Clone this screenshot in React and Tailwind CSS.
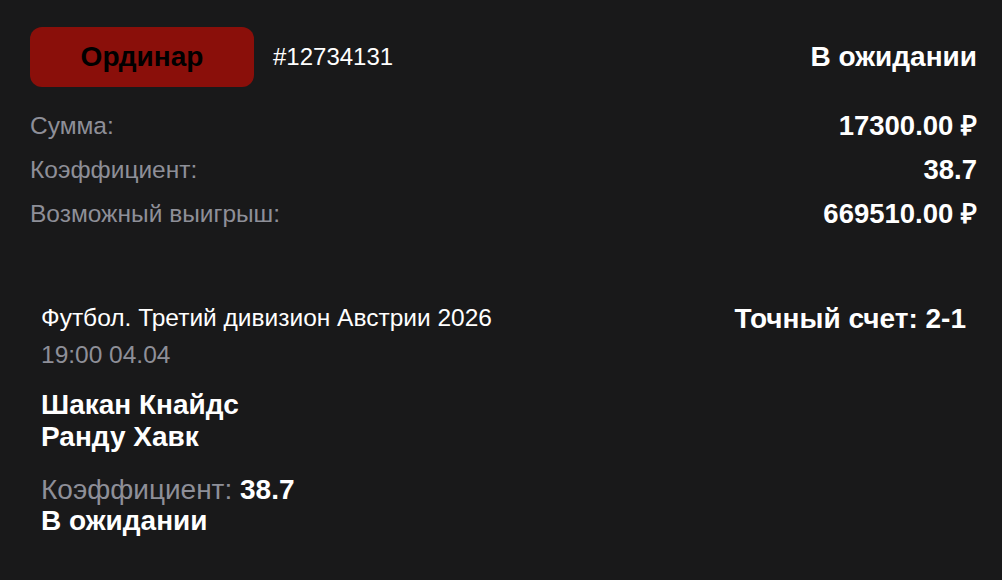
import React from "react";

export default function App() {
  return (
    <div
      className="w-[1002px] h-[580px] bg-[#19191a] text-white pl-[30px] pr-[25px] pt-[27px] overflow-hidden"
      style={{ fontFamily: '"Liberation Sans", Arial, sans-serif' }}
    >
      <div className="flex items-center">
        <div className="w-[224px] h-[60px] rounded-[12px] bg-[#8a0f0a] flex items-center justify-center text-black font-bold text-[28px]">
          Ординар
        </div>
        <div className="ml-[19px] text-[24px]">#12734131</div>
        <div className="ml-auto font-bold text-[28px]">В ожидании</div>
      </div>

      <div className="mt-[17px] flex flex-col">
        <div className="h-[44px] flex items-center justify-between">
          <span className="text-[24.5px] text-[#8e8f98]">Сумма:</span>
          <span className="text-[27.5px] font-bold">17300.00 ₽</span>
        </div>
        <div className="h-[44px] flex items-center justify-between">
          <span className="text-[24.5px] text-[#8e8f98]">Коэффициент:</span>
          <span className="text-[27.5px] font-bold">38.7</span>
        </div>
        <div className="h-[44px] flex items-center justify-between">
          <span className="text-[24.5px] text-[#8e8f98]">Возможный выигрыш:</span>
          <span className="text-[27.5px] font-bold">669510.00 ₽</span>
        </div>
      </div>

      <div className="mt-[68px] px-[11px] flex justify-between items-start">
        <div className="flex flex-col">
          <div className="text-[24.5px] leading-[28px]">Футбол. Третий дивизион Австрии 2026</div>
          <div className="mt-[9px] text-[24.5px] leading-[28px] text-[#8e8f98]">19:00 04.04</div>
          <div className="mt-[20px] text-[28px] leading-[32px] font-bold">
            <div>Шакан Кнайдс</div>
            <div>Ранду Хавк</div>
          </div>
          <div className="mt-[21px] text-[28px] leading-[31px]">
            <div>
              <span className="text-[#8e8f98]">Коэффициент: </span>
              <span className="font-bold">38.7</span>
            </div>
            <div className="font-bold">В ожидании</div>
          </div>
        </div>
        <div className="text-[28px] leading-[32px] font-bold -mt-[1px]">Точный счет: 2-1</div>
      </div>
    </div>
  );
}
